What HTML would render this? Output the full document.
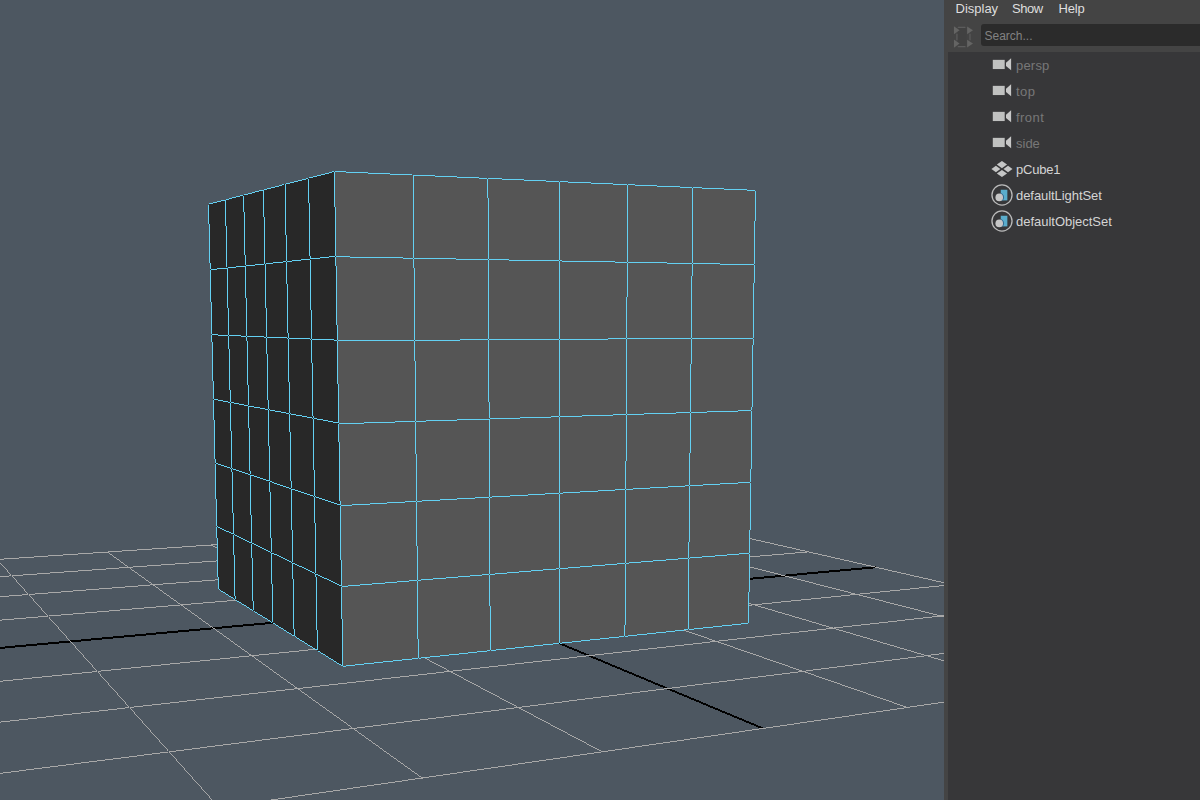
<!DOCTYPE html>
<html><head><meta charset="utf-8"><title>Maya</title>
<style>
html,body{margin:0;padding:0;width:1200px;height:800px;overflow:hidden;background:#444;font-family:"Liberation Sans",sans-serif;}
.vp{position:absolute;left:0;top:0;display:block}
.panel{position:absolute;left:944px;top:0;width:256px;height:800px;background:#444444;overflow:hidden}
.menu{position:absolute;left:0;top:0;height:22px;width:256px;font-size:13px;color:#dedede;}
.menu span{position:absolute;top:1px;line-height:15px;white-space:nowrap}
.search{position:absolute;left:37px;top:24px;width:230px;height:22px;background:#2b2b2b;border-radius:3px;color:#828282;font-size:12px;line-height:22px;}
.search span{position:absolute;left:3.5px;top:1px;line-height:22px}
.sicon{position:absolute;left:4px;top:22px}
.tree{position:absolute;left:4px;top:52px;width:252px;height:748px;background:#373739;}
.row{position:absolute;left:0;height:26px;width:256px;font-size:13px;color:#d4d4d4;white-space:nowrap}
.row span{position:absolute;left:72px;top:5.5px;line-height:15px}
.row.dim span{color:#787878}
.row .ic{position:absolute;left:44px;top:2px}
</style></head><body>
<svg class="vp" width="944" height="800" viewBox="0 0 944 800" shape-rendering="crispEdges">
<rect width="944" height="800" fill="#4d5761"/>
<path d="M308,537h1v2h-1zM309,538h2v2h-2zM311,539h3v2h-3zM314,540h2v2h-2zM316,541h2v2h-2zM318,542h3v2h-3zM321,543h2v2h-2zM323,544h3v2h-3zM326,545h2v2h-2zM328,546h2v2h-2zM330,547h3v2h-3zM333,548h2v2h-2zM335,549h3v2h-3zM338,550h2v2h-2zM340,551h2v2h-2zM342,552h3v2h-3zM345,553h2v2h-2zM347,554h3v2h-3zM350,555h2v2h-2zM352,556h2v2h-2zM354,557h3v2h-3zM357,558h2v2h-2zM359,559h2v2h-2zM361,560h3v2h-3zM364,561h2v2h-2zM366,562h3v2h-3zM369,563h2v2h-2zM371,564h2v2h-2zM373,565h3v2h-3zM376,566h2v2h-2zM378,567h3v2h-3zM381,568h2v2h-2zM383,569h2v2h-2zM385,570h3v2h-3zM388,571h2v2h-2zM390,572h3v2h-3zM393,573h2v2h-2zM395,574h2v2h-2zM397,575h3v2h-3zM400,576h2v2h-2zM402,577h2v2h-2zM404,578h3v2h-3zM407,579h2v2h-2zM409,580h3v2h-3zM412,581h2v2h-2zM414,582h2v2h-2zM416,583h3v2h-3zM419,584h2v2h-2zM421,585h3v2h-3zM424,586h2v2h-2zM426,587h2v2h-2zM428,588h3v2h-3zM431,589h2v2h-2zM433,590h3v2h-3zM436,591h2v2h-2zM438,592h2v2h-2zM440,593h3v2h-3zM443,594h2v2h-2zM445,595h3v2h-3zM448,596h2v2h-2zM450,597h2v2h-2zM452,598h3v2h-3zM455,599h2v2h-2zM457,600h2v2h-2zM459,601h3v2h-3zM462,602h2v2h-2zM464,603h3v2h-3zM467,604h2v2h-2zM469,605h2v2h-2zM471,606h3v2h-3zM474,607h2v2h-2zM476,608h3v2h-3zM479,609h2v2h-2zM481,610h2v2h-2zM483,611h3v2h-3zM486,612h2v2h-2zM488,613h3v2h-3zM491,614h2v2h-2zM493,615h2v2h-2zM495,616h3v2h-3zM498,617h2v2h-2zM500,618h3v2h-3zM503,619h2v2h-2zM505,620h2v2h-2zM507,621h3v2h-3zM510,622h2v2h-2zM512,623h2v2h-2zM514,624h3v2h-3zM517,625h2v2h-2zM519,626h3v2h-3zM522,627h2v2h-2zM524,628h2v2h-2zM526,629h3v2h-3zM529,630h2v2h-2zM531,631h3v2h-3zM534,632h2v2h-2zM536,633h2v2h-2zM538,634h3v2h-3zM541,635h2v2h-2zM543,636h3v2h-3zM546,637h2v2h-2zM548,638h2v2h-2zM550,639h3v2h-3zM553,640h2v2h-2zM555,641h2v2h-2zM557,642h3v2h-3zM560,643h2v2h-2zM562,644h3v2h-3zM565,645h2v2h-2zM567,646h2v2h-2zM569,647h3v2h-3zM572,648h2v2h-2zM574,649h3v2h-3zM577,650h2v2h-2zM579,651h2v2h-2zM581,652h3v2h-3zM584,653h2v2h-2zM586,654h3v2h-3zM589,655h2v2h-2zM591,656h2v2h-2zM593,657h3v2h-3zM596,658h2v2h-2zM598,659h3v2h-3zM601,660h2v2h-2zM603,661h2v2h-2zM605,662h3v2h-3zM608,663h2v2h-2zM610,664h2v2h-2zM612,665h3v2h-3zM615,666h2v2h-2zM617,667h3v2h-3zM620,668h2v2h-2zM622,669h2v2h-2zM624,670h3v2h-3zM627,671h2v2h-2zM629,672h3v2h-3zM632,673h2v2h-2zM634,674h2v2h-2zM636,675h3v2h-3zM639,676h2v2h-2zM641,677h3v2h-3zM644,678h2v2h-2zM646,679h2v2h-2zM648,680h3v2h-3zM651,681h2v2h-2zM653,682h2v2h-2zM655,683h3v2h-3zM658,684h2v2h-2zM660,685h3v2h-3zM663,686h2v2h-2zM665,687h2v2h-2zM667,688h3v2h-3zM670,689h2v2h-2zM672,690h3v2h-3zM675,691h2v2h-2zM677,692h2v2h-2zM679,693h3v2h-3zM682,694h2v2h-2zM684,695h3v2h-3zM687,696h2v2h-2zM689,697h2v2h-2zM691,698h3v2h-3zM694,699h2v2h-2zM696,700h3v2h-3zM699,701h2v2h-2zM701,702h2v2h-2zM703,703h3v2h-3zM706,704h2v2h-2zM708,705h2v2h-2zM710,706h3v2h-3zM713,707h2v2h-2zM715,708h3v2h-3zM718,709h2v2h-2zM720,710h2v2h-2zM722,711h3v2h-3zM725,712h2v2h-2zM727,713h3v2h-3zM730,714h2v2h-2zM732,715h2v2h-2zM734,716h3v2h-3zM737,717h2v2h-2zM739,718h3v2h-3zM742,719h2v2h-2zM744,720h2v2h-2zM746,721h3v2h-3zM749,722h2v2h-2zM751,723h3v2h-3zM754,724h2v2h-2zM756,725h2v2h-2zM758,726h3v2h-3zM761,727h2v2h-2zM0,647h5v2h-5zM5,646h10v2h-10zM15,645h11v2h-11zM26,644h11v2h-11zM37,643h11v2h-11zM48,642h11v2h-11zM59,641h11v2h-11zM70,640h11v2h-11zM81,639h10v2h-10zM91,638h11v2h-11zM102,637h11v2h-11zM113,636h11v2h-11zM124,635h11v2h-11zM135,634h11v2h-11zM146,633h10v2h-10zM156,632h11v2h-11zM167,631h11v2h-11zM178,630h11v2h-11zM189,629h11v2h-11zM200,628h11v2h-11zM211,627h11v2h-11zM222,626h10v2h-10zM232,625h11v2h-11zM243,624h11v2h-11zM254,623h11v2h-11zM265,622h11v2h-11zM276,621h11v2h-11zM287,620h11v2h-11zM298,619h10v2h-10zM308,618h11v2h-11zM319,617h11v2h-11zM330,616h11v2h-11zM341,615h11v2h-11zM352,614h11v2h-11zM363,613h10v2h-10zM373,612h11v2h-11zM384,611h11v2h-11zM395,610h11v2h-11zM406,609h11v2h-11zM417,608h11v2h-11zM428,607h11v2h-11zM439,606h10v2h-10zM449,605h11v2h-11zM460,604h11v2h-11zM471,603h11v2h-11zM482,602h11v2h-11zM493,601h11v2h-11zM504,600h11v2h-11zM515,599h10v2h-10zM525,598h11v2h-11zM536,597h11v2h-11zM547,596h11v2h-11zM558,595h11v2h-11zM569,594h11v2h-11zM580,593h10v2h-10zM590,592h11v2h-11zM601,591h11v2h-11zM612,590h11v2h-11zM623,589h11v2h-11zM634,588h11v2h-11zM645,587h11v2h-11zM656,586h10v2h-10zM666,585h11v2h-11zM677,584h11v2h-11zM688,583h11v2h-11zM699,582h11v2h-11zM710,581h11v2h-11zM721,580h10v2h-10zM731,579h11v2h-11zM742,578h11v2h-11zM753,577h11v2h-11zM764,576h11v2h-11zM775,575h11v2h-11zM786,574h11v2h-11zM797,573h10v2h-10zM807,572h11v2h-11zM818,571h11v2h-11zM829,570h11v2h-11zM840,569h11v2h-11zM851,568h11v2h-11zM862,567h11v2h-11zM873,566h3v2h-3z" fill="#000"/>
<path d="M0,559h4v1h-4zM4,558h15v1h-15zM19,557h15v1h-15zM34,556h14v1h-14zM48,555h15v1h-15zM63,554h15v1h-15zM78,553h15v1h-15zM93,552h15v1h-15zM108,551h14v1h-14zM122,550h15v1h-15zM137,549h15v1h-15zM152,548h15v1h-15zM167,547h15v1h-15zM182,546h14v1h-14zM196,545h15v1h-15zM211,544h15v1h-15zM226,543h15v1h-15zM241,542h15v1h-15zM256,541h15v1h-15zM271,540h14v1h-14zM285,539h15v1h-15zM300,538h15v1h-15zM315,537h15v1h-15zM330,536h15v1h-15zM345,535h14v1h-14zM359,534h15v1h-15zM374,533h15v1h-15zM389,532h15v1h-15zM404,531h15v1h-15zM419,530h14v1h-14zM433,529h15v1h-15zM448,528h15v1h-15zM463,527h15v1h-15zM478,526h15v1h-15zM493,525h15v1h-15zM508,524h14v1h-14zM522,523h15v1h-15zM537,522h15v1h-15zM552,521h15v1h-15zM567,520h15v1h-15zM582,519h14v1h-14zM596,518h15v1h-15zM611,517h15v1h-15zM626,516h15v1h-15zM641,515h8v1h-8zM0,563v1h1v-1zM1,564v1h1v-1zM2,565v1h1v-1zM3,566v1h1v-1zM4,567v1h1v-1zM5,568v1h1v-1zM6,569v1h1v-1zM7,570v2h1v-2zM8,572v1h1v-1zM9,573v1h1v-1zM10,574v1h1v-1zM11,575v1h1v-1zM12,576v1h1v-1zM13,577v1h1v-1zM14,578v1h1v-1zM15,579v1h1v-1zM16,580v2h1v-2zM17,582v1h1v-1zM18,583v1h1v-1zM19,584v1h1v-1zM20,585v1h1v-1zM21,586v1h1v-1zM22,587v1h1v-1zM23,588v1h1v-1zM24,589v2h1v-2zM25,591v1h1v-1zM26,592v1h1v-1zM27,593v1h1v-1zM28,594v1h1v-1zM29,595v1h1v-1zM30,596v1h1v-1zM31,597v1h1v-1zM32,598v1h1v-1zM33,599v2h1v-2zM34,601v1h1v-1zM35,602v1h1v-1zM36,603v1h1v-1zM37,604v1h1v-1zM38,605v1h1v-1zM39,606v1h1v-1zM40,607v1h1v-1zM41,608v2h1v-2zM42,610v1h1v-1zM43,611v1h1v-1zM44,612v1h1v-1zM45,613v1h1v-1zM46,614v1h1v-1zM47,615v1h1v-1zM48,616v1h1v-1zM49,617v2h1v-2zM50,619v1h1v-1zM51,620v1h1v-1zM52,621v1h1v-1zM53,622v1h1v-1zM54,623v1h1v-1zM55,624v1h1v-1zM56,625v1h1v-1zM57,626v1h1v-1zM58,627v2h1v-2zM59,629v1h1v-1zM60,630v1h1v-1zM61,631v1h1v-1zM62,632v1h1v-1zM63,633v1h1v-1zM64,634v1h1v-1zM65,635v1h1v-1zM66,636v2h1v-2zM67,638v1h1v-1zM68,639v1h1v-1zM69,640v1h1v-1zM70,641v1h1v-1zM71,642v1h1v-1zM72,643v1h1v-1zM73,644v1h1v-1zM74,645v1h1v-1zM75,646v2h1v-2zM76,648v1h1v-1zM77,649v1h1v-1zM78,650v1h1v-1zM79,651v1h1v-1zM80,652v1h1v-1zM81,653v1h1v-1zM82,654v1h1v-1zM83,655v2h1v-2zM84,657v1h1v-1zM85,658v1h1v-1zM86,659v1h1v-1zM87,660v1h1v-1zM88,661v1h1v-1zM89,662v1h1v-1zM90,663v1h1v-1zM91,664v1h1v-1zM92,665v2h1v-2zM93,667v1h1v-1zM94,668v1h1v-1zM95,669v1h1v-1zM96,670v1h1v-1zM97,671v1h1v-1zM98,672v1h1v-1zM99,673v1h1v-1zM100,674v2h1v-2zM101,676v1h1v-1zM102,677v1h1v-1zM103,678v1h1v-1zM104,679v1h1v-1zM105,680v1h1v-1zM106,681v1h1v-1zM107,682v1h1v-1zM108,683v2h1v-2zM109,685v1h1v-1zM110,686v1h1v-1zM111,687v1h1v-1zM112,688v1h1v-1zM113,689v1h1v-1zM114,690v1h1v-1zM115,691v1h1v-1zM116,692v1h1v-1zM117,693v2h1v-2zM118,695v1h1v-1zM119,696v1h1v-1zM120,697v1h1v-1zM121,698v1h1v-1zM122,699v1h1v-1zM123,700v1h1v-1zM124,701v1h1v-1zM125,702v2h1v-2zM126,704v1h1v-1zM127,705v1h1v-1zM128,706v1h1v-1zM129,707v1h1v-1zM130,708v1h1v-1zM131,709v1h1v-1zM132,710v1h1v-1zM133,711v1h1v-1zM134,712v2h1v-2zM135,714v1h1v-1zM136,715v1h1v-1zM137,716v1h1v-1zM138,717v1h1v-1zM139,718v1h1v-1zM140,719v1h1v-1zM141,720v1h1v-1zM142,721v2h1v-2zM143,723v1h1v-1zM144,724v1h1v-1zM145,725v1h1v-1zM146,726v1h1v-1zM147,727v1h1v-1zM148,728v1h1v-1zM149,729v1h1v-1zM150,730v2h1v-2zM151,732v1h1v-1zM152,733v1h1v-1zM153,734v1h1v-1zM154,735v1h1v-1zM155,736v1h1v-1zM156,737v1h1v-1zM157,738v1h1v-1zM158,739v1h1v-1zM159,740v2h1v-2zM160,742v1h1v-1zM161,743v1h1v-1zM162,744v1h1v-1zM163,745v1h1v-1zM164,746v1h1v-1zM165,747v1h1v-1zM166,748v1h1v-1zM167,749v2h1v-2zM168,751v1h1v-1zM169,752v1h1v-1zM170,753v1h1v-1zM171,754v1h1v-1zM172,755v1h1v-1zM173,756v1h1v-1zM174,757v1h1v-1zM175,758v1h1v-1zM176,759v2h1v-2zM177,761v1h1v-1zM178,762v1h1v-1zM179,763v1h1v-1zM180,764v1h1v-1zM181,765v1h1v-1zM182,766v1h1v-1zM183,767v1h1v-1zM184,768v2h1v-2zM185,770v1h1v-1zM186,771v1h1v-1zM187,772v1h1v-1zM188,773v1h1v-1zM189,774v1h1v-1zM190,775v1h1v-1zM191,776v1h1v-1zM192,777v2h1v-2zM193,779v1h1v-1zM194,780v1h1v-1zM195,781v1h1v-1zM196,782v1h1v-1zM197,783v1h1v-1zM198,784v1h1v-1zM199,785v1h1v-1zM200,786v1h1v-1zM201,787v2h1v-2zM202,789v1h1v-1zM203,790v1h1v-1zM204,791v1h1v-1zM205,792v1h1v-1zM206,793v1h1v-1zM207,794v1h1v-1zM208,795v1h1v-1zM209,796v2h1v-2zM210,798v1h1v-1zM211,799v1h1v-1zM0,576h9v1h-9zM9,575h14v1h-14zM23,574h14v1h-14zM37,573h13v1h-13zM50,572h14v1h-14zM64,571h14v1h-14zM78,570h14v1h-14zM92,569h14v1h-14zM106,568h13v1h-13zM119,567h14v1h-14zM133,566h14v1h-14zM147,565h14v1h-14zM161,564h14v1h-14zM175,563h14v1h-14zM189,562h13v1h-13zM202,561h14v1h-14zM216,560h14v1h-14zM230,559h14v1h-14zM244,558h14v1h-14zM258,557h14v1h-14zM272,556h13v1h-13zM285,555h14v1h-14zM299,554h14v1h-14zM313,553h14v1h-14zM327,552h14v1h-14zM341,551h13v1h-13zM354,550h14v1h-14zM368,549h14v1h-14zM382,548h14v1h-14zM396,547h14v1h-14zM410,546h14v1h-14zM424,545h13v1h-13zM437,544h14v1h-14zM451,543h14v1h-14zM465,542h14v1h-14zM479,541h14v1h-14zM493,540h14v1h-14zM507,539h13v1h-13zM520,538h14v1h-14zM534,537h14v1h-14zM548,536h14v1h-14zM562,535h14v1h-14zM576,534h13v1h-13zM589,533h14v1h-14zM603,532h14v1h-14zM617,531h14v1h-14zM631,530h14v1h-14zM645,529h14v1h-14zM659,528h13v1h-13zM672,527h14v1h-14zM686,526h11v1h-11zM107,552h2v1h-2zM109,553h1v1h-1zM110,554h2v1h-2zM112,555h1v1h-1zM113,556h1v1h-1zM114,557h2v1h-2zM116,558h1v1h-1zM117,559h2v1h-2zM119,560h1v1h-1zM120,561h1v1h-1zM121,562h2v1h-2zM123,563h1v1h-1zM124,564h1v1h-1zM125,565h2v1h-2zM127,566h1v1h-1zM128,567h2v1h-2zM130,568h1v1h-1zM131,569h1v1h-1zM132,570h2v1h-2zM134,571h1v1h-1zM135,572h2v1h-2zM137,573h1v1h-1zM138,574h1v1h-1zM139,575h2v1h-2zM141,576h1v1h-1zM142,577h2v1h-2zM144,578h1v1h-1zM145,579h1v1h-1zM146,580h2v1h-2zM148,581h1v1h-1zM149,582h2v1h-2zM151,583h1v1h-1zM152,584h1v1h-1zM153,585h2v1h-2zM155,586h1v1h-1zM156,587h2v1h-2zM158,588h1v1h-1zM159,589h1v1h-1zM160,590h2v1h-2zM162,591h1v1h-1zM163,592h1v1h-1zM164,593h2v1h-2zM166,594h1v1h-1zM167,595h2v1h-2zM169,596h1v1h-1zM170,597h1v1h-1zM171,598h2v1h-2zM173,599h1v1h-1zM174,600h2v1h-2zM176,601h1v1h-1zM177,602h1v1h-1zM178,603h2v1h-2zM180,604h1v1h-1zM181,605h2v1h-2zM183,606h1v1h-1zM184,607h1v1h-1zM185,608h2v1h-2zM187,609h1v1h-1zM188,610h2v1h-2zM190,611h1v1h-1zM191,612h1v1h-1zM192,613h2v1h-2zM194,614h1v1h-1zM195,615h2v1h-2zM197,616h1v1h-1zM198,617h1v1h-1zM199,618h2v1h-2zM201,619h1v1h-1zM202,620h1v1h-1zM203,621h2v1h-2zM205,622h1v1h-1zM206,623h2v1h-2zM208,624h1v1h-1zM209,625h1v1h-1zM210,626h2v1h-2zM212,627h1v1h-1zM213,628h2v1h-2zM215,629h1v1h-1zM216,630h1v1h-1zM217,631h2v1h-2zM219,632h1v1h-1zM220,633h2v1h-2zM222,634h1v1h-1zM223,635h1v1h-1zM224,636h2v1h-2zM226,637h1v1h-1zM227,638h2v1h-2zM229,639h1v1h-1zM230,640h1v1h-1zM231,641h2v1h-2zM233,642h1v1h-1zM234,643h1v1h-1zM235,644h2v1h-2zM237,645h1v1h-1zM238,646h2v1h-2zM240,647h1v1h-1zM241,648h1v1h-1zM242,649h2v1h-2zM244,650h1v1h-1zM245,651h2v1h-2zM247,652h1v1h-1zM248,653h1v1h-1zM249,654h2v1h-2zM251,655h1v1h-1zM252,656h2v1h-2zM254,657h1v1h-1zM255,658h1v1h-1zM256,659h2v1h-2zM258,660h1v1h-1zM259,661h2v1h-2zM261,662h1v1h-1zM262,663h1v1h-1zM263,664h2v1h-2zM265,665h1v1h-1zM266,666h2v1h-2zM268,667h1v1h-1zM269,668h1v1h-1zM270,669h2v1h-2zM272,670h1v1h-1zM273,671h1v1h-1zM274,672h2v1h-2zM276,673h1v1h-1zM277,674h2v1h-2zM279,675h1v1h-1zM280,676h1v1h-1zM281,677h2v1h-2zM283,678h1v1h-1zM284,679h2v1h-2zM286,680h1v1h-1zM287,681h1v1h-1zM288,682h2v1h-2zM290,683h1v1h-1zM291,684h2v1h-2zM293,685h1v1h-1zM294,686h1v1h-1zM295,687h2v1h-2zM297,688h1v1h-1zM298,689h2v1h-2zM300,690h1v1h-1zM301,691h1v1h-1zM302,692h2v1h-2zM304,693h1v1h-1zM305,694h2v1h-2zM307,695h1v1h-1zM308,696h1v1h-1zM309,697h2v1h-2zM311,698h1v1h-1zM312,699h1v1h-1zM313,700h2v1h-2zM315,701h1v1h-1zM316,702h2v1h-2zM318,703h1v1h-1zM319,704h1v1h-1zM320,705h2v1h-2zM322,706h1v1h-1zM323,707h2v1h-2zM325,708h1v1h-1zM326,709h1v1h-1zM327,710h2v1h-2zM329,711h1v1h-1zM330,712h2v1h-2zM332,713h1v1h-1zM333,714h1v1h-1zM334,715h2v1h-2zM336,716h1v1h-1zM337,717h2v1h-2zM339,718h1v1h-1zM340,719h1v1h-1zM341,720h2v1h-2zM343,721h1v1h-1zM344,722h2v1h-2zM346,723h1v1h-1zM347,724h1v1h-1zM348,725h2v1h-2zM350,726h1v1h-1zM351,727h1v1h-1zM352,728h2v1h-2zM354,729h1v1h-1zM355,730h2v1h-2zM357,731h1v1h-1zM358,732h1v1h-1zM359,733h2v1h-2zM361,734h1v1h-1zM362,735h2v1h-2zM364,736h1v1h-1zM365,737h1v1h-1zM366,738h2v1h-2zM368,739h1v1h-1zM369,740h2v1h-2zM371,741h1v1h-1zM372,742h1v1h-1zM373,743h2v1h-2zM375,744h1v1h-1zM376,745h2v1h-2zM378,746h1v1h-1zM379,747h1v1h-1zM380,748h2v1h-2zM382,749h1v1h-1zM383,750h1v1h-1zM384,751h2v1h-2zM386,752h1v1h-1zM387,753h2v1h-2zM389,754h1v1h-1zM390,755h1v1h-1zM391,756h2v1h-2zM393,757h1v1h-1zM394,758h2v1h-2zM396,759h1v1h-1zM397,760h1v1h-1zM398,761h2v1h-2zM400,762h1v1h-1zM401,763h2v1h-2zM403,764h1v1h-1zM404,765h1v1h-1zM405,766h2v1h-2zM407,767h1v1h-1zM408,768h2v1h-2zM410,769h1v1h-1zM411,770h1v1h-1zM412,771h2v1h-2zM414,772h1v1h-1zM415,773h2v1h-2zM417,774h1v1h-1zM418,775h1v1h-1zM419,776h2v1h-2zM421,777h1v1h-1zM422,778h1v1h-1zM0,596h9v1h-9zM9,595h13v1h-13zM22,594h13v1h-13zM35,593h13v1h-13zM48,592h13v1h-13zM61,591h12v1h-12zM73,590h13v1h-13zM86,589h13v1h-13zM99,588h13v1h-13zM112,587h13v1h-13zM125,586h13v1h-13zM138,585h12v1h-12zM150,584h13v1h-13zM163,583h13v1h-13zM176,582h13v1h-13zM189,581h13v1h-13zM202,580h13v1h-13zM215,579h12v1h-12zM227,578h13v1h-13zM240,577h13v1h-13zM253,576h13v1h-13zM266,575h13v1h-13zM279,574h13v1h-13zM292,573h12v1h-12zM304,572h13v1h-13zM317,571h13v1h-13zM330,570h13v1h-13zM343,569h13v1h-13zM356,568h13v1h-13zM369,567h12v1h-12zM381,566h13v1h-13zM394,565h13v1h-13zM407,564h13v1h-13zM420,563h13v1h-13zM433,562h13v1h-13zM446,561h12v1h-12zM458,560h13v1h-13zM471,559h13v1h-13zM484,558h13v1h-13zM497,557h13v1h-13zM510,556h13v1h-13zM523,555h12v1h-12zM535,554h13v1h-13zM548,553h13v1h-13zM561,552h13v1h-13zM574,551h13v1h-13zM587,550h13v1h-13zM600,549h12v1h-12zM612,548h13v1h-13zM625,547h13v1h-13zM638,546h13v1h-13zM651,545h13v1h-13zM664,544h12v1h-12zM676,543h13v1h-13zM689,542h13v1h-13zM702,541h13v1h-13zM715,540h13v1h-13zM728,539h13v1h-13zM741,538h9v1h-9zM211,545h2v1h-2zM213,546h2v1h-2zM215,547h2v1h-2zM217,548h2v1h-2zM219,549h1v1h-1zM220,550h2v1h-2zM222,551h2v1h-2zM224,552h2v1h-2zM226,553h2v1h-2zM228,554h2v1h-2zM230,555h2v1h-2zM232,556h2v1h-2zM234,557h2v1h-2zM236,558h1v1h-1zM237,559h2v1h-2zM239,560h2v1h-2zM241,561h2v1h-2zM243,562h2v1h-2zM245,563h2v1h-2zM247,564h2v1h-2zM249,565h2v1h-2zM251,566h2v1h-2zM253,567h2v1h-2zM255,568h1v1h-1zM256,569h2v1h-2zM258,570h2v1h-2zM260,571h2v1h-2zM262,572h2v1h-2zM264,573h2v1h-2zM266,574h2v1h-2zM268,575h2v1h-2zM270,576h2v1h-2zM272,577h1v1h-1zM273,578h2v1h-2zM275,579h2v1h-2zM277,580h2v1h-2zM279,581h2v1h-2zM281,582h2v1h-2zM283,583h2v1h-2zM285,584h2v1h-2zM287,585h2v1h-2zM289,586h1v1h-1zM290,587h2v1h-2zM292,588h2v1h-2zM294,589h2v1h-2zM296,590h2v1h-2zM298,591h2v1h-2zM300,592h2v1h-2zM302,593h2v1h-2zM304,594h2v1h-2zM306,595h1v1h-1zM307,596h2v1h-2zM309,597h2v1h-2zM311,598h2v1h-2zM313,599h2v1h-2zM315,600h2v1h-2zM317,601h2v1h-2zM319,602h2v1h-2zM321,603h2v1h-2zM323,604h1v1h-1zM324,605h2v1h-2zM326,606h2v1h-2zM328,607h2v1h-2zM330,608h2v1h-2zM332,609h2v1h-2zM334,610h2v1h-2zM336,611h2v1h-2zM338,612h2v1h-2zM340,613h2v1h-2zM342,614h1v1h-1zM343,615h2v1h-2zM345,616h2v1h-2zM347,617h2v1h-2zM349,618h2v1h-2zM351,619h2v1h-2zM353,620h2v1h-2zM355,621h2v1h-2zM357,622h2v1h-2zM359,623h1v1h-1zM360,624h2v1h-2zM362,625h2v1h-2zM364,626h2v1h-2zM366,627h2v1h-2zM368,628h2v1h-2zM370,629h2v1h-2zM372,630h2v1h-2zM374,631h2v1h-2zM376,632h1v1h-1zM377,633h2v1h-2zM379,634h2v1h-2zM381,635h2v1h-2zM383,636h2v1h-2zM385,637h2v1h-2zM387,638h2v1h-2zM389,639h2v1h-2zM391,640h2v1h-2zM393,641h1v1h-1zM394,642h2v1h-2zM396,643h2v1h-2zM398,644h2v1h-2zM400,645h2v1h-2zM402,646h2v1h-2zM404,647h2v1h-2zM406,648h2v1h-2zM408,649h2v1h-2zM410,650h1v1h-1zM411,651h2v1h-2zM413,652h2v1h-2zM415,653h2v1h-2zM417,654h2v1h-2zM419,655h2v1h-2zM421,656h2v1h-2zM423,657h2v1h-2zM425,658h2v1h-2zM427,659h2v1h-2zM429,660h1v1h-1zM430,661h2v1h-2zM432,662h2v1h-2zM434,663h2v1h-2zM436,664h2v1h-2zM438,665h2v1h-2zM440,666h2v1h-2zM442,667h2v1h-2zM444,668h2v1h-2zM446,669h1v1h-1zM447,670h2v1h-2zM449,671h2v1h-2zM451,672h2v1h-2zM453,673h2v1h-2zM455,674h2v1h-2zM457,675h2v1h-2zM459,676h2v1h-2zM461,677h2v1h-2zM463,678h1v1h-1zM464,679h2v1h-2zM466,680h2v1h-2zM468,681h2v1h-2zM470,682h2v1h-2zM472,683h2v1h-2zM474,684h2v1h-2zM476,685h2v1h-2zM478,686h2v1h-2zM480,687h1v1h-1zM481,688h2v1h-2zM483,689h2v1h-2zM485,690h2v1h-2zM487,691h2v1h-2zM489,692h2v1h-2zM491,693h2v1h-2zM493,694h2v1h-2zM495,695h2v1h-2zM497,696h2v1h-2zM499,697h1v1h-1zM500,698h2v1h-2zM502,699h2v1h-2zM504,700h2v1h-2zM506,701h2v1h-2zM508,702h2v1h-2zM510,703h2v1h-2zM512,704h2v1h-2zM514,705h2v1h-2zM516,706h1v1h-1zM517,707h2v1h-2zM519,708h2v1h-2zM521,709h2v1h-2zM523,710h2v1h-2zM525,711h2v1h-2zM527,712h2v1h-2zM529,713h2v1h-2zM531,714h2v1h-2zM533,715h1v1h-1zM534,716h2v1h-2zM536,717h2v1h-2zM538,718h2v1h-2zM540,719h2v1h-2zM542,720h2v1h-2zM544,721h2v1h-2zM546,722h2v1h-2zM548,723h2v1h-2zM550,724h1v1h-1zM551,725h2v1h-2zM553,726h2v1h-2zM555,727h2v1h-2zM557,728h2v1h-2zM559,729h2v1h-2zM561,730h2v1h-2zM563,731h2v1h-2zM565,732h2v1h-2zM567,733h1v1h-1zM568,734h2v1h-2zM570,735h2v1h-2zM572,736h2v1h-2zM574,737h2v1h-2zM576,738h2v1h-2zM578,739h2v1h-2zM580,740h2v1h-2zM582,741h2v1h-2zM584,742h2v1h-2zM586,743h1v1h-1zM587,744h2v1h-2zM589,745h2v1h-2zM591,746h2v1h-2zM593,747h2v1h-2zM595,748h2v1h-2zM597,749h2v1h-2zM599,750h2v1h-2zM601,751h2v1h-2zM0,620h2v1h-2zM2,619h12v1h-12zM14,618h12v1h-12zM26,617h12v1h-12zM38,616h11v1h-11zM49,615h12v1h-12zM61,614h12v1h-12zM73,613h12v1h-12zM85,612h12v1h-12zM97,611h12v1h-12zM109,610h11v1h-11zM120,609h12v1h-12zM132,608h12v1h-12zM144,607h12v1h-12zM156,606h12v1h-12zM168,605h12v1h-12zM180,604h11v1h-11zM191,603h12v1h-12zM203,602h12v1h-12zM215,601h12v1h-12zM227,600h12v1h-12zM239,599h12v1h-12zM251,598h12v1h-12zM263,597h11v1h-11zM274,596h12v1h-12zM286,595h12v1h-12zM298,594h12v1h-12zM310,593h12v1h-12zM322,592h12v1h-12zM334,591h11v1h-11zM345,590h12v1h-12zM357,589h12v1h-12zM369,588h12v1h-12zM381,587h12v1h-12zM393,586h12v1h-12zM405,585h11v1h-11zM416,584h12v1h-12zM428,583h12v1h-12zM440,582h12v1h-12zM452,581h12v1h-12zM464,580h12v1h-12zM476,579h11v1h-11zM487,578h12v1h-12zM499,577h12v1h-12zM511,576h12v1h-12zM523,575h12v1h-12zM535,574h12v1h-12zM547,573h12v1h-12zM559,572h11v1h-11zM570,571h12v1h-12zM582,570h12v1h-12zM594,569h12v1h-12zM606,568h12v1h-12zM618,567h12v1h-12zM630,566h11v1h-11zM641,565h12v1h-12zM653,564h12v1h-12zM665,563h12v1h-12zM677,562h12v1h-12zM689,561h12v1h-12zM701,560h11v1h-11zM712,559h12v1h-12zM724,558h12v1h-12zM736,557h12v1h-12zM748,556h12v1h-12zM760,555h12v1h-12zM772,554h12v1h-12zM784,553h11v1h-11zM795,552h12v1h-12zM807,551h2v1h-2zM400,532h3v1h-3zM403,533h3v1h-3zM406,534h3v1h-3zM409,535h3v1h-3zM412,536h3v1h-3zM415,537h3v1h-3zM418,538h3v1h-3zM421,539h2v1h-2zM423,540h3v1h-3zM426,541h3v1h-3zM429,542h3v1h-3zM432,543h3v1h-3zM435,544h3v1h-3zM438,545h3v1h-3zM441,546h3v1h-3zM444,547h3v1h-3zM447,548h2v1h-2zM449,549h3v1h-3zM452,550h3v1h-3zM455,551h3v1h-3zM458,552h3v1h-3zM461,553h3v1h-3zM464,554h3v1h-3zM467,555h3v1h-3zM470,556h3v1h-3zM473,557h2v1h-2zM475,558h3v1h-3zM478,559h3v1h-3zM481,560h3v1h-3zM484,561h3v1h-3zM487,562h3v1h-3zM490,563h3v1h-3zM493,564h3v1h-3zM496,565h3v1h-3zM499,566h2v1h-2zM501,567h3v1h-3zM504,568h3v1h-3zM507,569h3v1h-3zM510,570h3v1h-3zM513,571h3v1h-3zM516,572h3v1h-3zM519,573h3v1h-3zM522,574h3v1h-3zM525,575h2v1h-2zM527,576h3v1h-3zM530,577h3v1h-3zM533,578h3v1h-3zM536,579h3v1h-3zM539,580h3v1h-3zM542,581h3v1h-3zM545,582h3v1h-3zM548,583h3v1h-3zM551,584h2v1h-2zM553,585h3v1h-3zM556,586h3v1h-3zM559,587h3v1h-3zM562,588h3v1h-3zM565,589h3v1h-3zM568,590h3v1h-3zM571,591h3v1h-3zM574,592h3v1h-3zM577,593h2v1h-2zM579,594h3v1h-3zM582,595h3v1h-3zM585,596h3v1h-3zM588,597h3v1h-3zM591,598h3v1h-3zM594,599h3v1h-3zM597,600h3v1h-3zM600,601h3v1h-3zM603,602h2v1h-2zM605,603h3v1h-3zM608,604h3v1h-3zM611,605h3v1h-3zM614,606h3v1h-3zM617,607h3v1h-3zM620,608h3v1h-3zM623,609h3v1h-3zM626,610h3v1h-3zM629,611h2v1h-2zM631,612h3v1h-3zM634,613h3v1h-3zM637,614h3v1h-3zM640,615h3v1h-3zM643,616h3v1h-3zM646,617h3v1h-3zM649,618h3v1h-3zM652,619h3v1h-3zM655,620h2v1h-2zM657,621h3v1h-3zM660,622h3v1h-3zM663,623h3v1h-3zM666,624h3v1h-3zM669,625h3v1h-3zM672,626h3v1h-3zM675,627h3v1h-3zM678,628h3v1h-3zM681,629h2v1h-2zM683,630h3v1h-3zM686,631h3v1h-3zM689,632h3v1h-3zM692,633h3v1h-3zM695,634h3v1h-3zM698,635h3v1h-3zM701,636h3v1h-3zM704,637h3v1h-3zM707,638h2v1h-2zM709,639h3v1h-3zM712,640h3v1h-3zM715,641h3v1h-3zM718,642h3v1h-3zM721,643h3v1h-3zM724,644h3v1h-3zM727,645h3v1h-3zM730,646h3v1h-3zM733,647h2v1h-2zM735,648h3v1h-3zM738,649h3v1h-3zM741,650h3v1h-3zM744,651h3v1h-3zM747,652h3v1h-3zM750,653h3v1h-3zM753,654h3v1h-3zM756,655h3v1h-3zM759,656h3v1h-3zM762,657h2v1h-2zM764,658h3v1h-3zM767,659h3v1h-3zM770,660h3v1h-3zM773,661h3v1h-3zM776,662h3v1h-3zM779,663h3v1h-3zM782,664h3v1h-3zM785,665h3v1h-3zM788,666h2v1h-2zM790,667h3v1h-3zM793,668h3v1h-3zM796,669h3v1h-3zM799,670h3v1h-3zM802,671h3v1h-3zM805,672h3v1h-3zM808,673h3v1h-3zM811,674h3v1h-3zM814,675h2v1h-2zM816,676h3v1h-3zM819,677h3v1h-3zM822,678h3v1h-3zM825,679h3v1h-3zM828,680h3v1h-3zM831,681h3v1h-3zM834,682h3v1h-3zM837,683h3v1h-3zM840,684h2v1h-2zM842,685h3v1h-3zM845,686h3v1h-3zM848,687h3v1h-3zM851,688h3v1h-3zM854,689h3v1h-3zM857,690h3v1h-3zM860,691h3v1h-3zM863,692h3v1h-3zM866,693h2v1h-2zM868,694h3v1h-3zM871,695h3v1h-3zM874,696h3v1h-3zM877,697h3v1h-3zM880,698h3v1h-3zM883,699h3v1h-3zM886,700h3v1h-3zM889,701h3v1h-3zM892,702h2v1h-2zM894,703h3v1h-3zM897,704h3v1h-3zM900,705h3v1h-3zM903,706h3v1h-3zM906,707h2v1h-2zM0,681h3v1h-3zM3,680h10v1h-10zM13,679h10v1h-10zM23,678h9v1h-9zM32,677h10v1h-10zM42,676h10v1h-10zM52,675h10v1h-10zM62,674h10v1h-10zM72,673h10v1h-10zM82,672h10v1h-10zM92,671h9v1h-9zM101,670h10v1h-10zM111,669h10v1h-10zM121,668h10v1h-10zM131,667h10v1h-10zM141,666h10v1h-10zM151,665h10v1h-10zM161,664h9v1h-9zM170,663h10v1h-10zM180,662h10v1h-10zM190,661h10v1h-10zM200,660h10v1h-10zM210,659h10v1h-10zM220,658h10v1h-10zM230,657h9v1h-9zM239,656h10v1h-10zM249,655h10v1h-10zM259,654h10v1h-10zM269,653h10v1h-10zM279,652h10v1h-10zM289,651h10v1h-10zM299,650h9v1h-9zM308,649h10v1h-10zM318,648h10v1h-10zM328,647h10v1h-10zM338,646h10v1h-10zM348,645h10v1h-10zM358,644h10v1h-10zM368,643h9v1h-9zM377,642h10v1h-10zM387,641h10v1h-10zM397,640h10v1h-10zM407,639h10v1h-10zM417,638h10v1h-10zM427,637h10v1h-10zM437,636h9v1h-9zM446,635h10v1h-10zM456,634h10v1h-10zM466,633h10v1h-10zM476,632h10v1h-10zM486,631h10v1h-10zM496,630h10v1h-10zM506,629h9v1h-9zM515,628h10v1h-10zM525,627h10v1h-10zM535,626h10v1h-10zM545,625h10v1h-10zM555,624h10v1h-10zM565,623h9v1h-9zM574,622h10v1h-10zM584,621h10v1h-10zM594,620h10v1h-10zM604,619h10v1h-10zM614,618h10v1h-10zM624,617h10v1h-10zM634,616h9v1h-9zM643,615h10v1h-10zM653,614h10v1h-10zM663,613h10v1h-10zM673,612h10v1h-10zM683,611h10v1h-10zM693,610h10v1h-10zM703,609h9v1h-9zM712,608h10v1h-10zM722,607h10v1h-10zM732,606h10v1h-10zM742,605h10v1h-10zM752,604h10v1h-10zM762,603h10v1h-10zM772,602h9v1h-9zM781,601h10v1h-10zM791,600h10v1h-10zM801,599h10v1h-10zM811,598h10v1h-10zM821,597h10v1h-10zM831,596h10v1h-10zM841,595h9v1h-9zM850,594h10v1h-10zM860,593h10v1h-10zM870,592h10v1h-10zM880,591h10v1h-10zM890,590h10v1h-10zM900,589h10v1h-10zM910,588h9v1h-9zM919,587h10v1h-10zM929,586h10v1h-10zM939,585h5v1h-5zM488,526h2v1h-2zM490,527h4v1h-4zM494,528h3v1h-3zM497,529h3v1h-3zM500,530h4v1h-4zM504,531h3v1h-3zM507,532h4v1h-4zM511,533h3v1h-3zM514,534h3v1h-3zM517,535h4v1h-4zM521,536h3v1h-3zM524,537h4v1h-4zM528,538h3v1h-3zM531,539h3v1h-3zM534,540h4v1h-4zM538,541h3v1h-3zM541,542h4v1h-4zM545,543h3v1h-3zM548,544h3v1h-3zM551,545h4v1h-4zM555,546h3v1h-3zM558,547h3v1h-3zM561,548h4v1h-4zM565,549h3v1h-3zM568,550h4v1h-4zM572,551h3v1h-3zM575,552h3v1h-3zM578,553h4v1h-4zM582,554h3v1h-3zM585,555h4v1h-4zM589,556h3v1h-3zM592,557h3v1h-3zM595,558h4v1h-4zM599,559h3v1h-3zM602,560h4v1h-4zM606,561h3v1h-3zM609,562h3v1h-3zM612,563h4v1h-4zM616,564h3v1h-3zM619,565h3v1h-3zM622,566h4v1h-4zM626,567h3v1h-3zM629,568h4v1h-4zM633,569h3v1h-3zM636,570h3v1h-3zM639,571h4v1h-4zM643,572h3v1h-3zM646,573h4v1h-4zM650,574h3v1h-3zM653,575h3v1h-3zM656,576h4v1h-4zM660,577h3v1h-3zM663,578h4v1h-4zM667,579h3v1h-3zM670,580h3v1h-3zM673,581h4v1h-4zM677,582h3v1h-3zM680,583h4v1h-4zM684,584h3v1h-3zM687,585h3v1h-3zM690,586h4v1h-4zM694,587h3v1h-3zM697,588h3v1h-3zM700,589h4v1h-4zM704,590h3v1h-3zM707,591h4v1h-4zM711,592h3v1h-3zM714,593h3v1h-3zM717,594h4v1h-4zM721,595h3v1h-3zM724,596h4v1h-4zM728,597h3v1h-3zM731,598h3v1h-3zM734,599h4v1h-4zM738,600h3v1h-3zM741,601h4v1h-4zM745,602h3v1h-3zM748,603h3v1h-3zM751,604h4v1h-4zM755,605h3v1h-3zM758,606h3v1h-3zM761,607h4v1h-4zM765,608h3v1h-3zM768,609h4v1h-4zM772,610h3v1h-3zM775,611h3v1h-3zM778,612h4v1h-4zM782,613h3v1h-3zM785,614h4v1h-4zM789,615h3v1h-3zM792,616h3v1h-3zM795,617h4v1h-4zM799,618h3v1h-3zM802,619h4v1h-4zM806,620h3v1h-3zM809,621h3v1h-3zM812,622h4v1h-4zM816,623h3v1h-3zM819,624h3v1h-3zM822,625h4v1h-4zM826,626h3v1h-3zM829,627h4v1h-4zM833,628h3v1h-3zM836,629h3v1h-3zM839,630h4v1h-4zM843,631h3v1h-3zM846,632h4v1h-4zM850,633h3v1h-3zM853,634h3v1h-3zM856,635h4v1h-4zM860,636h3v1h-3zM863,637h4v1h-4zM867,638h3v1h-3zM870,639h3v1h-3zM873,640h4v1h-4zM877,641h3v1h-3zM880,642h3v1h-3zM883,643h4v1h-4zM887,644h3v1h-3zM890,645h4v1h-4zM894,646h3v1h-3zM897,647h3v1h-3zM900,648h4v1h-4zM904,649h3v1h-3zM907,650h4v1h-4zM911,651h3v1h-3zM914,652h3v1h-3zM917,653h4v1h-4zM921,654h3v1h-3zM924,655h4v1h-4zM928,656h3v1h-3zM931,657h3v1h-3zM934,658h4v1h-4zM938,659h3v1h-3zM941,660h3v1h-3zM0,722h1v1h-1zM1,721h9v1h-9zM10,720h9v1h-9zM19,719h9v1h-9zM28,718h9v1h-9zM37,717h9v1h-9zM46,716h8v1h-8zM54,715h9v1h-9zM63,714h9v1h-9zM72,713h9v1h-9zM81,712h9v1h-9zM90,711h9v1h-9zM99,710h9v1h-9zM108,709h9v1h-9zM117,708h8v1h-8zM125,707h9v1h-9zM134,706h9v1h-9zM143,705h9v1h-9zM152,704h9v1h-9zM161,703h9v1h-9zM170,702h9v1h-9zM179,701h8v1h-8zM187,700h9v1h-9zM196,699h9v1h-9zM205,698h9v1h-9zM214,697h9v1h-9zM223,696h9v1h-9zM232,695h9v1h-9zM241,694h8v1h-8zM249,693h9v1h-9zM258,692h9v1h-9zM267,691h9v1h-9zM276,690h9v1h-9zM285,689h9v1h-9zM294,688h9v1h-9zM303,687h9v1h-9zM312,686h8v1h-8zM320,685h9v1h-9zM329,684h9v1h-9zM338,683h9v1h-9zM347,682h9v1h-9zM356,681h9v1h-9zM365,680h9v1h-9zM374,679h8v1h-8zM382,678h9v1h-9zM391,677h9v1h-9zM400,676h9v1h-9zM409,675h9v1h-9zM418,674h9v1h-9zM427,673h9v1h-9zM436,672h8v1h-8zM444,671h9v1h-9zM453,670h9v1h-9zM462,669h9v1h-9zM471,668h9v1h-9zM480,667h9v1h-9zM489,666h9v1h-9zM498,665h9v1h-9zM507,664h8v1h-8zM515,663h9v1h-9zM524,662h9v1h-9zM533,661h9v1h-9zM542,660h9v1h-9zM551,659h9v1h-9zM560,658h9v1h-9zM569,657h8v1h-8zM577,656h9v1h-9zM586,655h9v1h-9zM595,654h9v1h-9zM604,653h9v1h-9zM613,652h9v1h-9zM622,651h9v1h-9zM631,650h8v1h-8zM639,649h9v1h-9zM648,648h9v1h-9zM657,647h9v1h-9zM666,646h9v1h-9zM675,645h9v1h-9zM684,644h9v1h-9zM693,643h9v1h-9zM702,642h8v1h-8zM710,641h9v1h-9zM719,640h9v1h-9zM728,639h9v1h-9zM737,638h9v1h-9zM746,637h9v1h-9zM755,636h9v1h-9zM764,635h8v1h-8zM772,634h9v1h-9zM781,633h9v1h-9zM790,632h9v1h-9zM799,631h9v1h-9zM808,630h9v1h-9zM817,629h9v1h-9zM826,628h8v1h-8zM834,627h9v1h-9zM843,626h9v1h-9zM852,625h9v1h-9zM861,624h9v1h-9zM870,623h9v1h-9zM879,622h9v1h-9zM888,621h9v1h-9zM897,620h8v1h-8zM905,619h9v1h-9zM914,618h9v1h-9zM923,617h9v1h-9zM932,616h9v1h-9zM941,615h3v1h-3zM570,520h2v1h-2zM572,521h3v1h-3zM575,522h4v1h-4zM579,523h4v1h-4zM583,524h4v1h-4zM587,525h4v1h-4zM591,526h4v1h-4zM595,527h4v1h-4zM599,528h4v1h-4zM603,529h4v1h-4zM607,530h3v1h-3zM610,531h4v1h-4zM614,532h4v1h-4zM618,533h4v1h-4zM622,534h4v1h-4zM626,535h4v1h-4zM630,536h4v1h-4zM634,537h4v1h-4zM638,538h3v1h-3zM641,539h4v1h-4zM645,540h4v1h-4zM649,541h4v1h-4zM653,542h4v1h-4zM657,543h4v1h-4zM661,544h4v1h-4zM665,545h4v1h-4zM669,546h4v1h-4zM673,547h3v1h-3zM676,548h4v1h-4zM680,549h4v1h-4zM684,550h4v1h-4zM688,551h4v1h-4zM692,552h4v1h-4zM696,553h4v1h-4zM700,554h4v1h-4zM704,555h4v1h-4zM708,556h3v1h-3zM711,557h4v1h-4zM715,558h4v1h-4zM719,559h4v1h-4zM723,560h4v1h-4zM727,561h4v1h-4zM731,562h4v1h-4zM735,563h4v1h-4zM739,564h4v1h-4zM743,565h3v1h-3zM746,566h4v1h-4zM750,567h4v1h-4zM754,568h4v1h-4zM758,569h4v1h-4zM762,570h4v1h-4zM766,571h4v1h-4zM770,572h4v1h-4zM774,573h4v1h-4zM778,574h3v1h-3zM781,575h4v1h-4zM785,576h4v1h-4zM789,577h4v1h-4zM793,578h4v1h-4zM797,579h4v1h-4zM801,580h4v1h-4zM805,581h4v1h-4zM809,582h4v1h-4zM813,583h3v1h-3zM816,584h4v1h-4zM820,585h4v1h-4zM824,586h4v1h-4zM828,587h4v1h-4zM832,588h4v1h-4zM836,589h4v1h-4zM840,590h4v1h-4zM844,591h4v1h-4zM848,592h3v1h-3zM851,593h4v1h-4zM855,594h4v1h-4zM859,595h4v1h-4zM863,596h4v1h-4zM867,597h4v1h-4zM871,598h4v1h-4zM875,599h4v1h-4zM879,600h4v1h-4zM883,601h3v1h-3zM886,602h4v1h-4zM890,603h4v1h-4zM894,604h4v1h-4zM898,605h4v1h-4zM902,606h4v1h-4zM906,607h4v1h-4zM910,608h4v1h-4zM914,609h4v1h-4zM918,610h3v1h-3zM921,611h4v1h-4zM925,612h4v1h-4zM929,613h4v1h-4zM933,614h4v1h-4zM937,615h4v1h-4zM941,616h3v1h-3zM0,773h3v1h-3zM3,772h8v1h-8zM11,771h8v1h-8zM19,770h7v1h-7zM26,769h8v1h-8zM34,768h8v1h-8zM42,767h8v1h-8zM50,766h8v1h-8zM58,765h8v1h-8zM66,764h8v1h-8zM74,763h7v1h-7zM81,762h8v1h-8zM89,761h8v1h-8zM97,760h8v1h-8zM105,759h8v1h-8zM113,758h8v1h-8zM121,757h8v1h-8zM129,756h8v1h-8zM137,755h7v1h-7zM144,754h8v1h-8zM152,753h8v1h-8zM160,752h8v1h-8zM168,751h8v1h-8zM176,750h8v1h-8zM184,749h8v1h-8zM192,748h8v1h-8zM200,747h7v1h-7zM207,746h8v1h-8zM215,745h8v1h-8zM223,744h8v1h-8zM231,743h8v1h-8zM239,742h8v1h-8zM247,741h8v1h-8zM255,740h7v1h-7zM262,739h8v1h-8zM270,738h8v1h-8zM278,737h8v1h-8zM286,736h8v1h-8zM294,735h8v1h-8zM302,734h8v1h-8zM310,733h8v1h-8zM318,732h7v1h-7zM325,731h8v1h-8zM333,730h8v1h-8zM341,729h8v1h-8zM349,728h8v1h-8zM357,727h8v1h-8zM365,726h8v1h-8zM373,725h8v1h-8zM381,724h7v1h-7zM388,723h8v1h-8zM396,722h8v1h-8zM404,721h8v1h-8zM412,720h8v1h-8zM420,719h8v1h-8zM428,718h8v1h-8zM436,717h8v1h-8zM444,716h7v1h-7zM451,715h8v1h-8zM459,714h8v1h-8zM467,713h8v1h-8zM475,712h8v1h-8zM483,711h8v1h-8zM491,710h8v1h-8zM499,709h7v1h-7zM506,708h8v1h-8zM514,707h8v1h-8zM522,706h8v1h-8zM530,705h8v1h-8zM538,704h8v1h-8zM546,703h8v1h-8zM554,702h8v1h-8zM562,701h7v1h-7zM569,700h8v1h-8zM577,699h8v1h-8zM585,698h8v1h-8zM593,697h8v1h-8zM601,696h8v1h-8zM609,695h8v1h-8zM617,694h8v1h-8zM625,693h7v1h-7zM632,692h8v1h-8zM640,691h8v1h-8zM648,690h8v1h-8zM656,689h8v1h-8zM664,688h8v1h-8zM672,687h8v1h-8zM680,686h7v1h-7zM687,685h8v1h-8zM695,684h8v1h-8zM703,683h8v1h-8zM711,682h8v1h-8zM719,681h8v1h-8zM727,680h8v1h-8zM735,679h8v1h-8zM743,678h7v1h-7zM750,677h8v1h-8zM758,676h8v1h-8zM766,675h8v1h-8zM774,674h8v1h-8zM782,673h8v1h-8zM790,672h8v1h-8zM798,671h8v1h-8zM806,670h7v1h-7zM813,669h8v1h-8zM821,668h8v1h-8zM829,667h8v1h-8zM837,666h8v1h-8zM845,665h8v1h-8zM853,664h8v1h-8zM861,663h7v1h-7zM868,662h8v1h-8zM876,661h8v1h-8zM884,660h8v1h-8zM892,659h8v1h-8zM900,658h8v1h-8zM908,657h8v1h-8zM916,656h8v1h-8zM924,655h7v1h-7zM931,654h8v1h-8zM939,653h5v1h-5zM648,515h3v1h-3zM651,516h5v1h-5zM656,517h4v1h-4zM660,518h4v1h-4zM664,519h5v1h-5zM669,520h4v1h-4zM673,521h4v1h-4zM677,522h5v1h-5zM682,523h4v1h-4zM686,524h5v1h-5zM691,525h4v1h-4zM695,526h4v1h-4zM699,527h5v1h-5zM704,528h4v1h-4zM708,529h5v1h-5zM713,530h4v1h-4zM717,531h4v1h-4zM721,532h5v1h-5zM726,533h4v1h-4zM730,534h4v1h-4zM734,535h5v1h-5zM739,536h4v1h-4zM743,537h5v1h-5zM748,538h4v1h-4zM752,539h4v1h-4zM756,540h5v1h-5zM761,541h4v1h-4zM765,542h5v1h-5zM770,543h4v1h-4zM774,544h4v1h-4zM778,545h5v1h-5zM783,546h4v1h-4zM787,547h5v1h-5zM792,548h4v1h-4zM796,549h4v1h-4zM800,550h5v1h-5zM805,551h4v1h-4zM809,552h4v1h-4zM813,553h5v1h-5zM818,554h4v1h-4zM822,555h5v1h-5zM827,556h4v1h-4zM831,557h4v1h-4zM835,558h5v1h-5zM840,559h4v1h-4zM844,560h5v1h-5zM849,561h4v1h-4zM853,562h4v1h-4zM857,563h5v1h-5zM862,564h4v1h-4zM866,565h5v1h-5zM871,566h4v1h-4zM875,567h4v1h-4zM879,568h5v1h-5zM884,569h4v1h-4zM888,570h4v1h-4zM892,571h5v1h-5zM897,572h4v1h-4zM901,573h5v1h-5zM906,574h4v1h-4zM910,575h4v1h-4zM914,576h5v1h-5zM919,577h4v1h-4zM923,578h5v1h-5zM928,579h4v1h-4zM932,580h4v1h-4zM936,581h5v1h-5zM941,582h3v1h-3zM271,799h7v1h-7zM278,798h7v1h-7zM285,797h7v1h-7zM292,796h6v1h-6zM298,795h7v1h-7zM305,794h7v1h-7zM312,793h7v1h-7zM319,792h7v1h-7zM326,791h7v1h-7zM333,790h7v1h-7zM340,789h7v1h-7zM347,788h6v1h-6zM353,787h7v1h-7zM360,786h7v1h-7zM367,785h7v1h-7zM374,784h7v1h-7zM381,783h7v1h-7zM388,782h7v1h-7zM395,781h7v1h-7zM402,780h6v1h-6zM408,779h7v1h-7zM415,778h7v1h-7zM422,777h7v1h-7zM429,776h7v1h-7zM436,775h7v1h-7zM443,774h7v1h-7zM450,773h7v1h-7zM457,772h6v1h-6zM463,771h7v1h-7zM470,770h7v1h-7zM477,769h7v1h-7zM484,768h7v1h-7zM491,767h7v1h-7zM498,766h7v1h-7zM505,765h7v1h-7zM512,764h6v1h-6zM518,763h7v1h-7zM525,762h7v1h-7zM532,761h7v1h-7zM539,760h7v1h-7zM546,759h7v1h-7zM553,758h7v1h-7zM560,757h7v1h-7zM567,756h6v1h-6zM573,755h7v1h-7zM580,754h7v1h-7zM587,753h7v1h-7zM594,752h7v1h-7zM601,751h7v1h-7zM608,750h7v1h-7zM615,749h7v1h-7zM622,748h7v1h-7zM629,747h6v1h-6zM635,746h7v1h-7zM642,745h7v1h-7zM649,744h7v1h-7zM656,743h7v1h-7zM663,742h7v1h-7zM670,741h7v1h-7zM677,740h7v1h-7zM684,739h6v1h-6zM690,738h7v1h-7zM697,737h7v1h-7zM704,736h7v1h-7zM711,735h7v1h-7zM718,734h7v1h-7zM725,733h7v1h-7zM732,732h7v1h-7zM739,731h6v1h-6zM745,730h7v1h-7zM752,729h7v1h-7zM759,728h7v1h-7zM766,727h7v1h-7zM773,726h7v1h-7zM780,725h7v1h-7zM787,724h7v1h-7zM794,723h6v1h-6zM800,722h7v1h-7zM807,721h7v1h-7zM814,720h7v1h-7zM821,719h7v1h-7zM828,718h7v1h-7zM835,717h7v1h-7zM842,716h7v1h-7zM849,715h6v1h-6zM855,714h7v1h-7zM862,713h7v1h-7zM869,712h7v1h-7zM876,711h7v1h-7zM883,710h7v1h-7zM890,709h7v1h-7zM897,708h7v1h-7zM904,707h6v1h-6zM910,706h7v1h-7zM917,705h7v1h-7zM924,704h7v1h-7zM931,703h7v1h-7zM938,702h6v1h-6z" fill="#a8a8a8"/>
<polygon points="208.5,204.2 334.4,171.5 342.8,666.3 218.3,589.1" fill="#282828"/>
<polygon points="334.4,171.5 755.5,190.4 748.5,623.2 342.8,666.3" fill="#555555"/>
<path d="M208,204v20h1v-20zM209,224v39h1v-39zM210,263v39h1v-39zM211,302v40h1v-40zM212,342v39h1v-39zM213,381v39h1v-39zM214,420v39h1v-39zM215,459v40h1v-40zM216,499v39h1v-39zM217,538v39h1v-39zM218,577v13h1v-13zM208,204h1v1h-1zM209,203h4v1h-4zM213,202h4v1h-4zM217,201h4v1h-4zM221,200h4v1h-4zM225,199h4v1h-4zM229,198h3v1h-3zM232,197h4v1h-4zM236,196h4v1h-4zM240,195h4v1h-4zM244,194h4v1h-4zM248,193h4v1h-4zM252,192h3v1h-3zM255,191h4v1h-4zM259,190h4v1h-4zM263,189h4v1h-4zM267,188h4v1h-4zM271,187h4v1h-4zM275,186h4v1h-4zM279,185h3v1h-3zM282,184h4v1h-4zM286,183h4v1h-4zM290,182h4v1h-4zM294,181h4v1h-4zM298,180h4v1h-4zM302,179h4v1h-4zM306,178h3v1h-3zM309,177h4v1h-4zM313,176h4v1h-4zM317,175h4v1h-4zM321,174h4v1h-4zM325,173h4v1h-4zM329,172h3v1h-3zM332,171h3v1h-3zM225,199v27h1v-27zM226,226v41h1v-41zM227,267v41h1v-41zM228,308v41h1v-41zM229,349v41h1v-41zM230,390v41h1v-41zM231,431v41h1v-41zM232,472v41h1v-41zM233,513v42h1v-42zM234,555v41h1v-41zM235,596v4h1v-4zM210,269h7v1h-7zM217,268h10v1h-10zM227,267h9v1h-9zM236,266h9v1h-9zM245,265h10v1h-10zM255,264h9v1h-9zM264,263h9v1h-9zM273,262h10v1h-10zM283,261h9v1h-9zM292,260h9v1h-9zM301,259h10v1h-10zM311,258h9v1h-9zM320,257h9v1h-9zM329,256h7v1h-7zM243,195v17h1v-17zM244,212v43h1v-43zM245,255v43h1v-43zM246,298v43h1v-43zM247,341v44h1v-44zM248,385v43h1v-43zM249,428v43h1v-43zM250,471v44h1v-44zM251,515v43h1v-43zM252,558v43h1v-43zM253,601v10h1v-10zM211,334h7v1h-7zM218,335h23v1h-23zM241,336h23v1h-23zM264,337h23v1h-23zM287,338h23v1h-23zM310,339h24v1h-24zM334,340h4v1h-4zM263,189v28h1v-28zM264,217v46h1v-46zM265,263v45h1v-45zM266,308v46h1v-46zM267,354v46h1v-46zM268,400v46h1v-46zM269,446v46h1v-46zM270,492v46h1v-46zM271,538v46h1v-46zM272,584v39h1v-39zM213,399h5v1h-5zM218,400h5v1h-5zM223,401h5v1h-5zM228,402h6v1h-6zM234,403h5v1h-5zM239,404h5v1h-5zM244,405h5v1h-5zM249,406h5v1h-5zM254,407h6v1h-6zM260,408h5v1h-5zM265,409h5v1h-5zM270,410h5v1h-5zM275,411h6v1h-6zM281,412h5v1h-5zM286,413h5v1h-5zM291,414h5v1h-5zM296,415h6v1h-6zM302,416h5v1h-5zM307,417h5v1h-5zM312,418h5v1h-5zM317,419h6v1h-6zM323,420h5v1h-5zM328,421h5v1h-5zM333,422h5v1h-5zM338,423h1v1h-1zM284,184v1h1v-1zM285,185v50h1v-50zM286,235v49h1v-49zM287,284v49h1v-49zM288,333v49h1v-49zM289,382v50h1v-50zM290,432v49h1v-49zM291,481v49h1v-49zM292,530v49h1v-49zM293,579v50h1v-50zM294,629v8h1v-8zM215,463h3v1h-3zM218,464h3v1h-3zM221,465h3v1h-3zM224,466h3v1h-3zM227,467h3v1h-3zM230,468h3v1h-3zM233,469h3v1h-3zM236,470h3v1h-3zM239,471h3v1h-3zM242,472h3v1h-3zM245,473h3v1h-3zM248,474h3v1h-3zM251,475h3v1h-3zM254,476h3v1h-3zM257,477h3v1h-3zM260,478h3v1h-3zM263,479h3v1h-3zM266,480h3v1h-3zM269,481h3v1h-3zM272,482h2v1h-2zM274,483h3v1h-3zM277,484h3v1h-3zM280,485h3v1h-3zM283,486h3v1h-3zM286,487h3v1h-3zM289,488h3v1h-3zM292,489h3v1h-3zM295,490h3v1h-3zM298,491h3v1h-3zM301,492h3v1h-3zM304,493h3v1h-3zM307,494h3v1h-3zM310,495h3v1h-3zM313,496h3v1h-3zM316,497h3v1h-3zM319,498h3v1h-3zM322,499h3v1h-3zM325,500h3v1h-3zM328,501h3v1h-3zM331,502h3v1h-3zM334,503h3v1h-3zM337,504h3v1h-3zM340,505h1v1h-1zM308,178v25h1v-25zM309,203v53h1v-53zM310,256v54h1v-54zM311,310v53h1v-53zM312,363v53h1v-53zM313,416v54h1v-54zM314,470v53h1v-53zM315,523v54h1v-54zM316,577v53h1v-53zM317,630v21h1v-21zM216,526h2v1h-2zM218,527h2v1h-2zM220,528h2v1h-2zM222,529h2v1h-2zM224,530h2v1h-2zM226,531h3v1h-3zM229,532h2v1h-2zM231,533h2v1h-2zM233,534h2v1h-2zM235,535h2v1h-2zM237,536h2v1h-2zM239,537h2v1h-2zM241,538h2v1h-2zM243,539h2v1h-2zM245,540h2v1h-2zM247,541h2v1h-2zM249,542h2v1h-2zM251,543h3v1h-3zM254,544h2v1h-2zM256,545h2v1h-2zM258,546h2v1h-2zM260,547h2v1h-2zM262,548h2v1h-2zM264,549h2v1h-2zM266,550h2v1h-2zM268,551h2v1h-2zM270,552h2v1h-2zM272,553h2v1h-2zM274,554h3v1h-3zM277,555h2v1h-2zM279,556h2v1h-2zM281,557h2v1h-2zM283,558h2v1h-2zM285,559h2v1h-2zM287,560h2v1h-2zM289,561h2v1h-2zM291,562h2v1h-2zM293,563h2v1h-2zM295,564h2v1h-2zM297,565h2v1h-2zM299,566h3v1h-3zM302,567h2v1h-2zM304,568h2v1h-2zM306,569h2v1h-2zM308,570h2v1h-2zM310,571h2v1h-2zM312,572h2v1h-2zM314,573h2v1h-2zM316,574h2v1h-2zM318,575h2v1h-2zM320,576h2v1h-2zM322,577h2v1h-2zM324,578h3v1h-3zM327,579h2v1h-2zM329,580h2v1h-2zM331,581h2v1h-2zM333,582h2v1h-2zM335,583h2v1h-2zM337,584h2v1h-2zM339,585h2v1h-2zM341,586h1v1h-1zM334,171v36h1v-36zM335,207v59h1v-59zM336,266v59h1v-59zM337,325v59h1v-59zM338,384v58h1v-58zM339,442v59h1v-59zM340,501v59h1v-59zM341,560v59h1v-59zM342,619v48h1v-48zM218,589h2v1h-2zM220,590h1v1h-1zM221,591h2v1h-2zM223,592h2v1h-2zM225,593h1v1h-1zM226,594h2v1h-2zM228,595h1v1h-1zM229,596h2v1h-2zM231,597h2v1h-2zM233,598h1v1h-1zM234,599h2v1h-2zM236,600h1v1h-1zM237,601h2v1h-2zM239,602h2v1h-2zM241,603h1v1h-1zM242,604h2v1h-2zM244,605h2v1h-2zM246,606h1v1h-1zM247,607h2v1h-2zM249,608h1v1h-1zM250,609h2v1h-2zM252,610h2v1h-2zM254,611h1v1h-1zM255,612h2v1h-2zM257,613h1v1h-1zM258,614h2v1h-2zM260,615h2v1h-2zM262,616h1v1h-1zM263,617h2v1h-2zM265,618h2v1h-2zM267,619h1v1h-1zM268,620h2v1h-2zM270,621h1v1h-1zM271,622h2v1h-2zM273,623h2v1h-2zM275,624h1v1h-1zM276,625h2v1h-2zM278,626h1v1h-1zM279,627h2v1h-2zM281,628h2v1h-2zM283,629h1v1h-1zM284,630h2v1h-2zM286,631h1v1h-1zM287,632h2v1h-2zM289,633h2v1h-2zM291,634h1v1h-1zM292,635h2v1h-2zM294,636h2v1h-2zM296,637h1v1h-1zM297,638h2v1h-2zM299,639h1v1h-1zM300,640h2v1h-2zM302,641h2v1h-2zM304,642h1v1h-1zM305,643h2v1h-2zM307,644h1v1h-1zM308,645h2v1h-2zM310,646h2v1h-2zM312,647h1v1h-1zM313,648h2v1h-2zM315,649h2v1h-2zM317,650h1v1h-1zM318,651h2v1h-2zM320,652h1v1h-1zM321,653h2v1h-2zM323,654h2v1h-2zM325,655h1v1h-1zM326,656h2v1h-2zM328,657h1v1h-1zM329,658h2v1h-2zM331,659h2v1h-2zM333,660h1v1h-1zM334,661h2v1h-2zM336,662h1v1h-1zM337,663h2v1h-2zM339,664h2v1h-2zM341,665h1v1h-1zM342,666h1v1h-1zM334,171v36h1v-36zM335,207v59h1v-59zM336,266v59h1v-59zM337,325v59h1v-59zM338,384v58h1v-58zM339,442v59h1v-59zM340,501v59h1v-59zM341,560v59h1v-59zM342,619v48h1v-48zM334,171h12v1h-12zM346,172h22v1h-22zM368,173h22v1h-22zM390,174h22v1h-22zM412,175h23v1h-23zM435,176h22v1h-22zM457,177h22v1h-22zM479,178h23v1h-23zM502,179h22v1h-22zM524,180h22v1h-22zM546,181h22v1h-22zM568,182h23v1h-23zM591,183h22v1h-22zM613,184h22v1h-22zM635,185h22v1h-22zM657,186h23v1h-23zM680,187h22v1h-22zM702,188h22v1h-22zM724,189h23v1h-23zM747,190h9v1h-9zM412,175v1h1v-1zM413,176v92h1v-92zM414,268v93h1v-93zM415,361v93h1v-93zM416,454v92h1v-92zM417,546v93h1v-93zM418,639v20h1v-20zM335,256h15v1h-15zM350,257h53v1h-53zM403,258h53v1h-53zM456,259h53v1h-53zM509,260h53v1h-53zM562,261h53v1h-53zM615,262h52v1h-52zM667,263h53v1h-53zM720,264h35v1h-35zM487,178v20h1v-20zM488,198v204h1v-204zM489,402v204h1v-204zM490,606v45h1v-45zM337,340h123v1h-123zM460,339h148v1h-148zM608,338h146v1h-146zM559,181v463h1v-463zM338,423h26v1h-26zM364,422h31v1h-31zM395,421h31v1h-31zM426,420h31v1h-31zM457,419h32v1h-32zM489,418h31v1h-31zM520,417h31v1h-31zM551,416h31v1h-31zM582,415h31v1h-31zM613,414h31v1h-31zM644,413h32v1h-32zM676,412h31v1h-31zM707,411h31v1h-31zM738,410h14v1h-14zM627,184v113h1v-113zM626,297v164h1v-164zM625,461v164h1v-164zM624,625v12h1v-12zM340,505h12v1h-12zM352,504h18v1h-18zM370,503h17v1h-17zM387,502h18v1h-18zM405,501h17v1h-17zM422,500h18v1h-18zM440,499h17v1h-17zM457,498h18v1h-18zM475,497h17v1h-17zM492,496h18v1h-18zM510,495h18v1h-18zM528,494h17v1h-17zM545,493h18v1h-18zM563,492h17v1h-17zM580,491h18v1h-18zM598,490h17v1h-17zM615,489h18v1h-18zM633,488h17v1h-17zM650,487h18v1h-18zM668,486h17v1h-17zM685,485h18v1h-18zM703,484h17v1h-17zM720,483h18v1h-18zM738,482h13v1h-13zM692,187v89h1v-89zM691,276v88h1v-88zM690,364v89h1v-89zM689,453v89h1v-89zM688,542v88h1v-88zM341,586h7v1h-7zM348,585h12v1h-12zM360,584h12v1h-12zM372,583h13v1h-13zM385,582h12v1h-12zM397,581h12v1h-12zM409,580h12v1h-12zM421,579h12v1h-12zM433,578h13v1h-13zM446,577h12v1h-12zM458,576h12v1h-12zM470,575h12v1h-12zM482,574h13v1h-13zM495,573h12v1h-12zM507,572h12v1h-12zM519,571h12v1h-12zM531,570h12v1h-12zM543,569h13v1h-13zM556,568h12v1h-12zM568,567h12v1h-12zM580,566h12v1h-12zM592,565h13v1h-13zM605,564h12v1h-12zM617,563h12v1h-12zM629,562h12v1h-12zM641,561h12v1h-12zM653,560h13v1h-13zM666,559h12v1h-12zM678,558h12v1h-12zM690,557h12v1h-12zM702,556h13v1h-13zM715,555h12v1h-12zM727,554h12v1h-12zM739,553h11v1h-11zM755,190v31h1v-31zM754,221v62h1v-62zM753,283v62h1v-62zM752,345v62h1v-62zM751,407v62h1v-62zM750,469v61h1v-61zM749,530v62h1v-62zM748,592v32h1v-32zM342,666h4v1h-4zM346,665h9v1h-9zM355,664h9v1h-9zM364,663h10v1h-10zM374,662h9v1h-9zM383,661h10v1h-10zM393,660h9v1h-9zM402,659h10v1h-10zM412,658h9v1h-9zM421,657h9v1h-9zM430,656h10v1h-10zM440,655h9v1h-9zM449,654h10v1h-10zM459,653h9v1h-9zM468,652h9v1h-9zM477,651h10v1h-10zM487,650h9v1h-9zM496,649h10v1h-10zM506,648h9v1h-9zM515,647h9v1h-9zM524,646h10v1h-10zM534,645h9v1h-9zM543,644h10v1h-10zM553,643h9v1h-9zM562,642h10v1h-10zM572,641h9v1h-9zM581,640h9v1h-9zM590,639h10v1h-10zM600,638h9v1h-9zM609,637h10v1h-10zM619,636h9v1h-9zM628,635h9v1h-9zM637,634h10v1h-10zM647,633h9v1h-9zM656,632h10v1h-10zM666,631h9v1h-9zM675,630h9v1h-9zM684,629h10v1h-10zM694,628h9v1h-9zM703,627h10v1h-10zM713,626h9v1h-9zM722,625h10v1h-10zM732,624h9v1h-9zM741,623h8v1h-8z" fill="#63d0f2"/>
</svg>
<div class="panel">
<div class="menu"><span style="left:11.5px">Display</span><span style="left:68px;letter-spacing:-0.5px">Show</span><span style="left:114.5px;letter-spacing:-0.2px">Help</span></div>
<svg class="sicon" width="32" height="28" viewBox="0 0 32 28"><rect x="10.3" y="6" width="8" height="17.8" fill="#414141"/><g fill="#646463"><path d="M5.95 4.2 L5.95 12.25 L11.55 8.2 Z"/><path d="M19.1 4.4 L19.1 12.25 L25 8.35 Z"/><path d="M5.95 17.5 L5.95 25.7 L11.55 21.5 Z"/><path d="M19.1 17.8 L19.1 25.5 L25 21.55 Z"/></g><g stroke="#5c5c5c" stroke-width="1.2" stroke-linecap="round"><line x1="10.3" y1="5.3" x2="17" y2="5.3"/><line x1="10.3" y1="24.7" x2="17" y2="24.7"/><line x1="8.9" y1="12" x2="8.9" y2="17.8"/><line x1="22" y1="12" x2="22" y2="17.8"/></g></svg>
<div class="search"><span>Search...</span></div>
<div class="tree"></div>
<div class="row dim" style="top:52px"><svg class="ic" width="32" height="24" viewBox="0 0 32 24"><rect x="4.8" y="5.85" width="11.9" height="9.2" fill="#c0c1c0"/><path d="M18 8.7 L23.1 4.2 L23.1 16.2 L18 12 Z" fill="#c8c8c8"/></svg><span style="letter-spacing:0.2px">persp</span></div>
<div class="row dim" style="top:78px"><svg class="ic" width="32" height="24" viewBox="0 0 32 24"><rect x="4.8" y="5.85" width="11.9" height="9.2" fill="#c0c1c0"/><path d="M18 8.7 L23.1 4.2 L23.1 16.2 L18 12 Z" fill="#c8c8c8"/></svg><span style="letter-spacing:0.45px">top</span></div>
<div class="row dim" style="top:104px"><svg class="ic" width="32" height="24" viewBox="0 0 32 24"><rect x="4.8" y="5.85" width="11.9" height="9.2" fill="#c0c1c0"/><path d="M18 8.7 L23.1 4.2 L23.1 16.2 L18 12 Z" fill="#c8c8c8"/></svg><span style="letter-spacing:0.45px">front</span></div>
<div class="row dim" style="top:130px"><svg class="ic" width="32" height="24" viewBox="0 0 32 24"><rect x="4.8" y="5.85" width="11.9" height="9.2" fill="#c0c1c0"/><path d="M18 8.7 L23.1 4.2 L23.1 16.2 L18 12 Z" fill="#c8c8c8"/></svg><span style="letter-spacing:0px">side</span></div>
<div class="row" style="top:156px"><svg class="ic" style="top:1px" width="32" height="24" viewBox="0 0 32 24"><g fill="#c5c6c6"><path d="M13.95 4.05 L19.049999999999997 7.6 L13.95 11.149999999999999 L8.85 7.6 Z"/><path d="M13.95 12.95 L19.049999999999997 16.45 L13.95 19.95 L8.85 16.45 Z"/><path d="M7.9 8.7 L12.4 12 L7.9 15.3 L3.4000000000000004 12 Z"/><path d="M20.0 8.7 L24.5 12 L20.0 15.3 L15.5 12 Z"/></g></svg><span style="letter-spacing:-0.23px">pCube1</span></div>
<div class="row" style="top:182px"><svg class="ic" style="top:1px" width="32" height="24" viewBox="0 0 32 24"><defs><clipPath id="bc5"><rect x="12.75" y="6.75" width="6.6" height="10.65"/></clipPath></defs><circle cx="14" cy="12" r="10.05" fill="none" stroke="#bababa" stroke-width="1.3"/><rect x="12.75" y="6.75" width="6.6" height="10.65" fill="#5aadcc"/><circle cx="11.25" cy="14.4" r="4.7" fill="#2e5f88" clip-path="url(#bc5)"/><circle cx="11.25" cy="14.4" r="3.8" fill="#c6c6c6"/></svg><span style="letter-spacing:-0.06px">defaultLightSet</span></div>
<div class="row" style="top:208px"><svg class="ic" style="top:1px" width="32" height="24" viewBox="0 0 32 24"><defs><clipPath id="bc6"><rect x="12.75" y="6.75" width="6.6" height="10.65"/></clipPath></defs><circle cx="14" cy="12" r="10.05" fill="none" stroke="#bababa" stroke-width="1.3"/><rect x="12.75" y="6.75" width="6.6" height="10.65" fill="#5aadcc"/><circle cx="11.25" cy="14.4" r="4.7" fill="#2e5f88" clip-path="url(#bc6)"/><circle cx="11.25" cy="14.4" r="3.8" fill="#c6c6c6"/></svg><span style="letter-spacing:-0.02px">defaultObjectSet</span></div>

</div>
</body></html>
